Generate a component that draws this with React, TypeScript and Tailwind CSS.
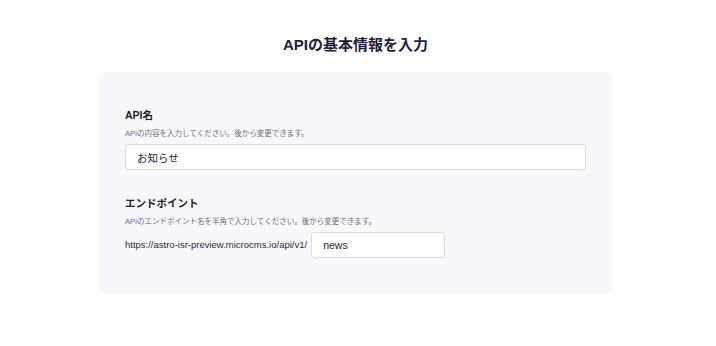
import React from 'react';

const FONT = '"Liberation Sans", "Noto Sans CJK JP", sans-serif';

const Field = ({
  label,
  help,
  children,
}: {
  label: string;
  help: string;
  children: React.ReactNode;
}) => (
  <div className="flex flex-col">
    <label className="text-[10.5px] font-bold leading-[16px] text-[#1c1c2e]">{label}</label>
    <p className="mt-[5px] text-[7.5px] leading-[12px] text-[#6b6b88]">{help}</p>
    <div className="mt-[4px]">{children}</div>
  </div>
);

const App = () => {
  return (
    <div className="w-[716px] h-[346px] bg-white" style={{ fontFamily: FONT }}>
      <div className="w-[513px] ml-[99px] pt-[34px]">
        <h1 className="text-center text-[15px] font-bold leading-[22px] text-[#21213b]">
          APIの基本情報を入力
        </h1>

        <div className="mt-[16px] rounded-[6px] bg-[#f8f8fc] px-[26px] pt-[35px] pb-[36px]">
          <Field label="API名" help="APIの内容を入力してください。後から変更できます。">
            <input
              defaultValue="お知らせ"
              className="h-[26px] w-[461px] rounded-[3px] border border-[#dcdce6] bg-white px-[11px] text-[10.5px] text-[#26263a] outline-none"
              style={{ fontFamily: FONT }}
            />
          </Field>

          <div className="mt-[25px]">
            <Field
              label="エンドポイント"
              help="APIのエンドポイント名を半角で入力してください。後から変更できます。"
            >
              <div className="flex items-center gap-[4px]">
                <span className="text-[9.5px] text-[#2a2a3a]">
                  https://astro-isr-preview.microcms.io/api/v1/
                </span>
                <input
                  defaultValue="news"
                  className="h-[26px] w-[134px] rounded-[3px] border border-[#dcdce6] bg-white px-[11px] text-[10.5px] text-[#26263a] outline-none"
                  style={{ fontFamily: FONT }}
                />
              </div>
            </Field>
          </div>
        </div>
      </div>
    </div>
  );
};

export default App;
